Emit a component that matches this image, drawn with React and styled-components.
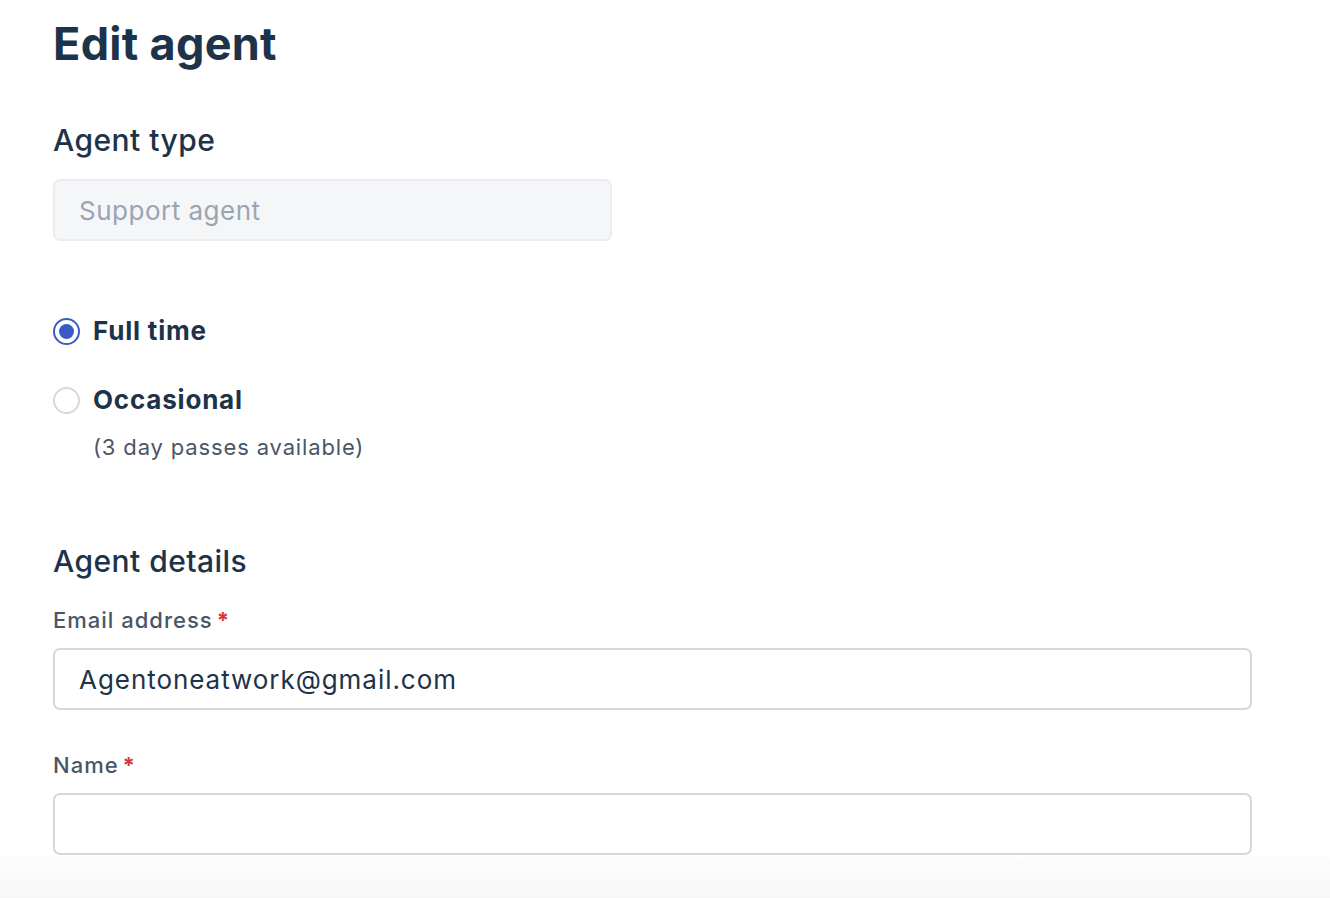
import React, { useState } from 'react';
import styled, { createGlobalStyle } from 'styled-components';

const GlobalStyle = createGlobalStyle`
  html, body {
    margin: 0;
    padding: 0;
    background: #ffffff;
  }
  body {
    font-family: 'Inter', 'Noto Sans', sans-serif;
    color: #1d3349;
  }
  * {
    box-sizing: border-box;
  }
`;

const Page = styled.main`
  padding: 17px 0 60px 53px;
  width: 1252px;
`;

const Title = styled.h1`
  margin: 0;
  font-size: 45px;
  line-height: 54px;
  font-weight: 700;
  letter-spacing: 0.3px;
  color: #1d3349;
`;

const SectionTitle = styled.h2`
  margin: ${(p) => p.$top}px 0 0;
  font-size: 30px;
  line-height: 36px;
  font-weight: 500;
  letter-spacing: 0.45px;
  color: #1d3349;
`;

const Field = styled.div`
  display: flex;
  flex-direction: column;
  gap: 14px;
  margin-top: ${(p) => p.$top}px;
`;

const Label = styled.label`
  font-size: 22px;
  line-height: 28px;
  font-weight: 500;
  letter-spacing: 1px;
  color: #4a5666;
  display: flex;
  align-items: center;
  gap: 4px;
`;

const Required = styled.span`
  color: #d23737;
  font-weight: 700;
`;

const Input = styled.input`
  height: 62px;
  width: ${(p) => (p.$narrow ? '559px' : '100%')};
  padding: 0 24px;
  border-radius: 7px;
  border: 2px solid ${(p) => (p.disabled ? '#e9ecf0' : '#d3d8e0')};
  background: ${(p) => (p.disabled ? '#f4f6f8' : '#ffffff')};
  font-family: inherit;
  font-size: 26px;
  letter-spacing: ${(p) => (p.disabled ? '0.5px' : '0.95px')};
  color: #1d3349;
  outline: none;

  &::placeholder {
    color: #9aa5b3;
  }
`;

const RadioGroup = styled.div`
  display: flex;
  flex-direction: column;
  gap: 33px;
  margin-top: 72px;
`;

const RadioRow = styled.label`
  display: flex;
  align-items: center;
  gap: 13px;
  height: 36px;
  cursor: pointer;
`;

const RadioCircle = styled.span`
  width: 27px;
  height: 27px;
  flex: none;
  border-radius: 50%;
  border: 2px solid ${(p) => (p.$checked ? '#3a5bc7' : '#d3d8e0')};
  display: flex;
  align-items: center;
  justify-content: center;

  &::after {
    content: '';
    width: 15px;
    height: 15px;
    border-radius: 50%;
    background: ${(p) => (p.$checked ? '#3a5bc7' : 'transparent')};
  }
`;

const RadioText = styled.span`
  font-size: 26px;
  line-height: 36px;
  font-weight: 700;
  letter-spacing: 0.8px;
  color: #1d3349;
`;

const Hint = styled.div`
  margin: -19px 0 0 40px;
  font-size: 22px;
  line-height: 30px;
  color: #4a5666;
  letter-spacing: 0.85px;
`;

const FooterFade = styled.div`
  position: fixed;
  left: 0;
  right: 0;
  bottom: 0;
  height: 41px;
  background: linear-gradient(to bottom, #fdfdfd, #f7f7f7);
  pointer-events: none;
`;

const options = [
  { id: 'full', label: 'Full time' },
  { id: 'occasional', label: 'Occasional', hint: '(3 day passes available)' },
];

export default function App() {
  const [type, setType] = useState('full');
  const [email, setEmail] = useState('Agentoneatwork@gmail.com');
  const [name, setName] = useState('');

  return (
    <>
      <GlobalStyle />
      <Page>
        <Title>Edit agent</Title>

        <SectionTitle $top={51}>Agent type</SectionTitle>
        <Field $top={21}>
          <Input $narrow disabled placeholder="Support agent" />
        </Field>

        <RadioGroup>
          {options.map((o) => (
            <React.Fragment key={o.id}>
              <RadioRow onClick={() => setType(o.id)}>
                <RadioCircle $checked={type === o.id} />
                <RadioText>{o.label}</RadioText>
              </RadioRow>
              {o.hint && <Hint>{o.hint}</Hint>}
            </React.Fragment>
          ))}
        </RadioGroup>

        <SectionTitle $top={81}>Agent details</SectionTitle>

        <Field $top={27}>
          <Label>
            Email address<Required>*</Required>
          </Label>
          <Input value={email} onChange={(e) => setEmail(e.target.value)} />
        </Field>

        <Field $top={41}>
          <Label>
            Name<Required>*</Required>
          </Label>
          <Input value={name} onChange={(e) => setName(e.target.value)} />
        </Field>
      </Page>
      <FooterFade />
    </>
  );
}
